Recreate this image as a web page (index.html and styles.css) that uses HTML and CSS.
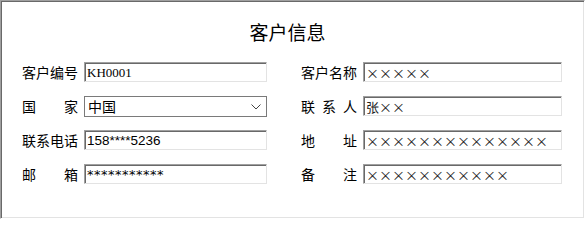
FILE: index.html
```html
<!DOCTYPE html>
<html lang="zh-CN">
<head>
<meta charset="utf-8">
<title>客户信息</title>
<link rel="stylesheet" href="styles.css">
</head>
<body>
<div class="frame">
  <h1 class="title">客户信息</h1>
  <div class="form">
    <div class="field">
      <span class="label">客户编号</span>
      <div class="input serif">KH0001</div>
    </div>
    <div class="field">
      <span class="label">客户名称</span>
      <div class="input wide">×××××</div>
    </div>
    <div class="field">
      <span class="label">国家</span>
      <div class="select">
        <span>中国</span>
        <svg class="chev" width="10" height="6" viewBox="0 0 10 6"><path d="M0.5 0.5 L5 5 L9.5 0.5" fill="none" stroke="#444" stroke-width="1"/></svg>
      </div>
    </div>
    <div class="field">
      <span class="label">联系人</span>
      <div class="input wide">张××</div>
    </div>
    <div class="field">
      <span class="label">联系电话</span>
      <div class="input sans">158****5236</div>
    </div>
    <div class="field">
      <span class="label">地址</span>
      <div class="input wide">××××××××××××××</div>
    </div>
    <div class="field">
      <span class="label">邮箱</span>
      <div class="input stars">***********</div>
    </div>
    <div class="field">
      <span class="label">备注</span>
      <div class="input wide">×××××××××××</div>
    </div>
  </div>
</div>
</body>
</html>
```
FILE: styles.css
```css
html, body {
  margin: 0;
  padding: 0;
  background: #ffffff;
}
body {
  width: 585px;
  height: 220px;
  font-family: "Noto Sans CJK SC", "DejaVu Sans", sans-serif;
  color: #000;
}
.frame {
  box-sizing: border-box;
  width: 585px;
  height: 219px;
  border-style: solid;
  border-width: 1px;
  border-color: #a0a0a0 #ffffff #ffffff #a0a0a0;
  box-shadow: inset 1px 1px 0 #696969, inset -1px -1px 0 #e3e3e3;
  padding: 0 0 0 21px;
}
.title {
  margin: 0;
  padding-top: 19px;
  padding-right: 31px;
  height: 24px;
  line-height: 24px;
  font-size: 19px;
  font-weight: normal;
  text-align: center;
  color: #000;
}
.form {
  margin-top: 18px;
  display: grid;
  grid-template-columns: 245px 261px;
  column-gap: 34px;
  row-gap: 14px;
}
.field {
  display: flex;
  align-items: center;
  gap: 6px;
  height: 20px;
}
.label {
  width: 56px;
  flex: none;
  font-size: 14px;
  line-height: 20px;
  text-align: justify;
  text-align-last: justify;
  white-space: nowrap;
}
.input {
  box-sizing: border-box;
  width: 184px;
  height: 20px;
  border-style: solid;
  border-width: 1px;
  border-color: #a0a0a0 #e3e3e3 #e3e3e3 #a0a0a0;
  box-shadow: inset 1px 1px 0 #696969;
  padding: 1px 0 0 2px;
  font-size: 13px;
  line-height: 18px;
  white-space: nowrap;
  overflow: hidden;
  color: #000;
}
.input.wide {
  width: 199px;
  color: #222;
}
.serif {
  font-family: "Liberation Serif", "DejaVu Serif", serif;
  font-size: 13px;
}
.sans {
  font-family: "Liberation Sans", "DejaVu Sans", sans-serif;
  font-size: 13.5px;
}
.stars {
  font-family: "DejaVu Sans", sans-serif;
  font-size: 13px;
  letter-spacing: 0.5px;
}
.select {
  box-sizing: border-box;
  width: 185px;
  height: 21px;
  border: 1px solid #7a7a7a;
  display: flex;
  align-items: center;
  justify-content: space-between;
  padding: 0 5px 0 3px;
  font-size: 14px;
  line-height: 19px;
  margin-top: 1px;
}
.chev {
  display: block;
  margin-top: 1px;
}
```
